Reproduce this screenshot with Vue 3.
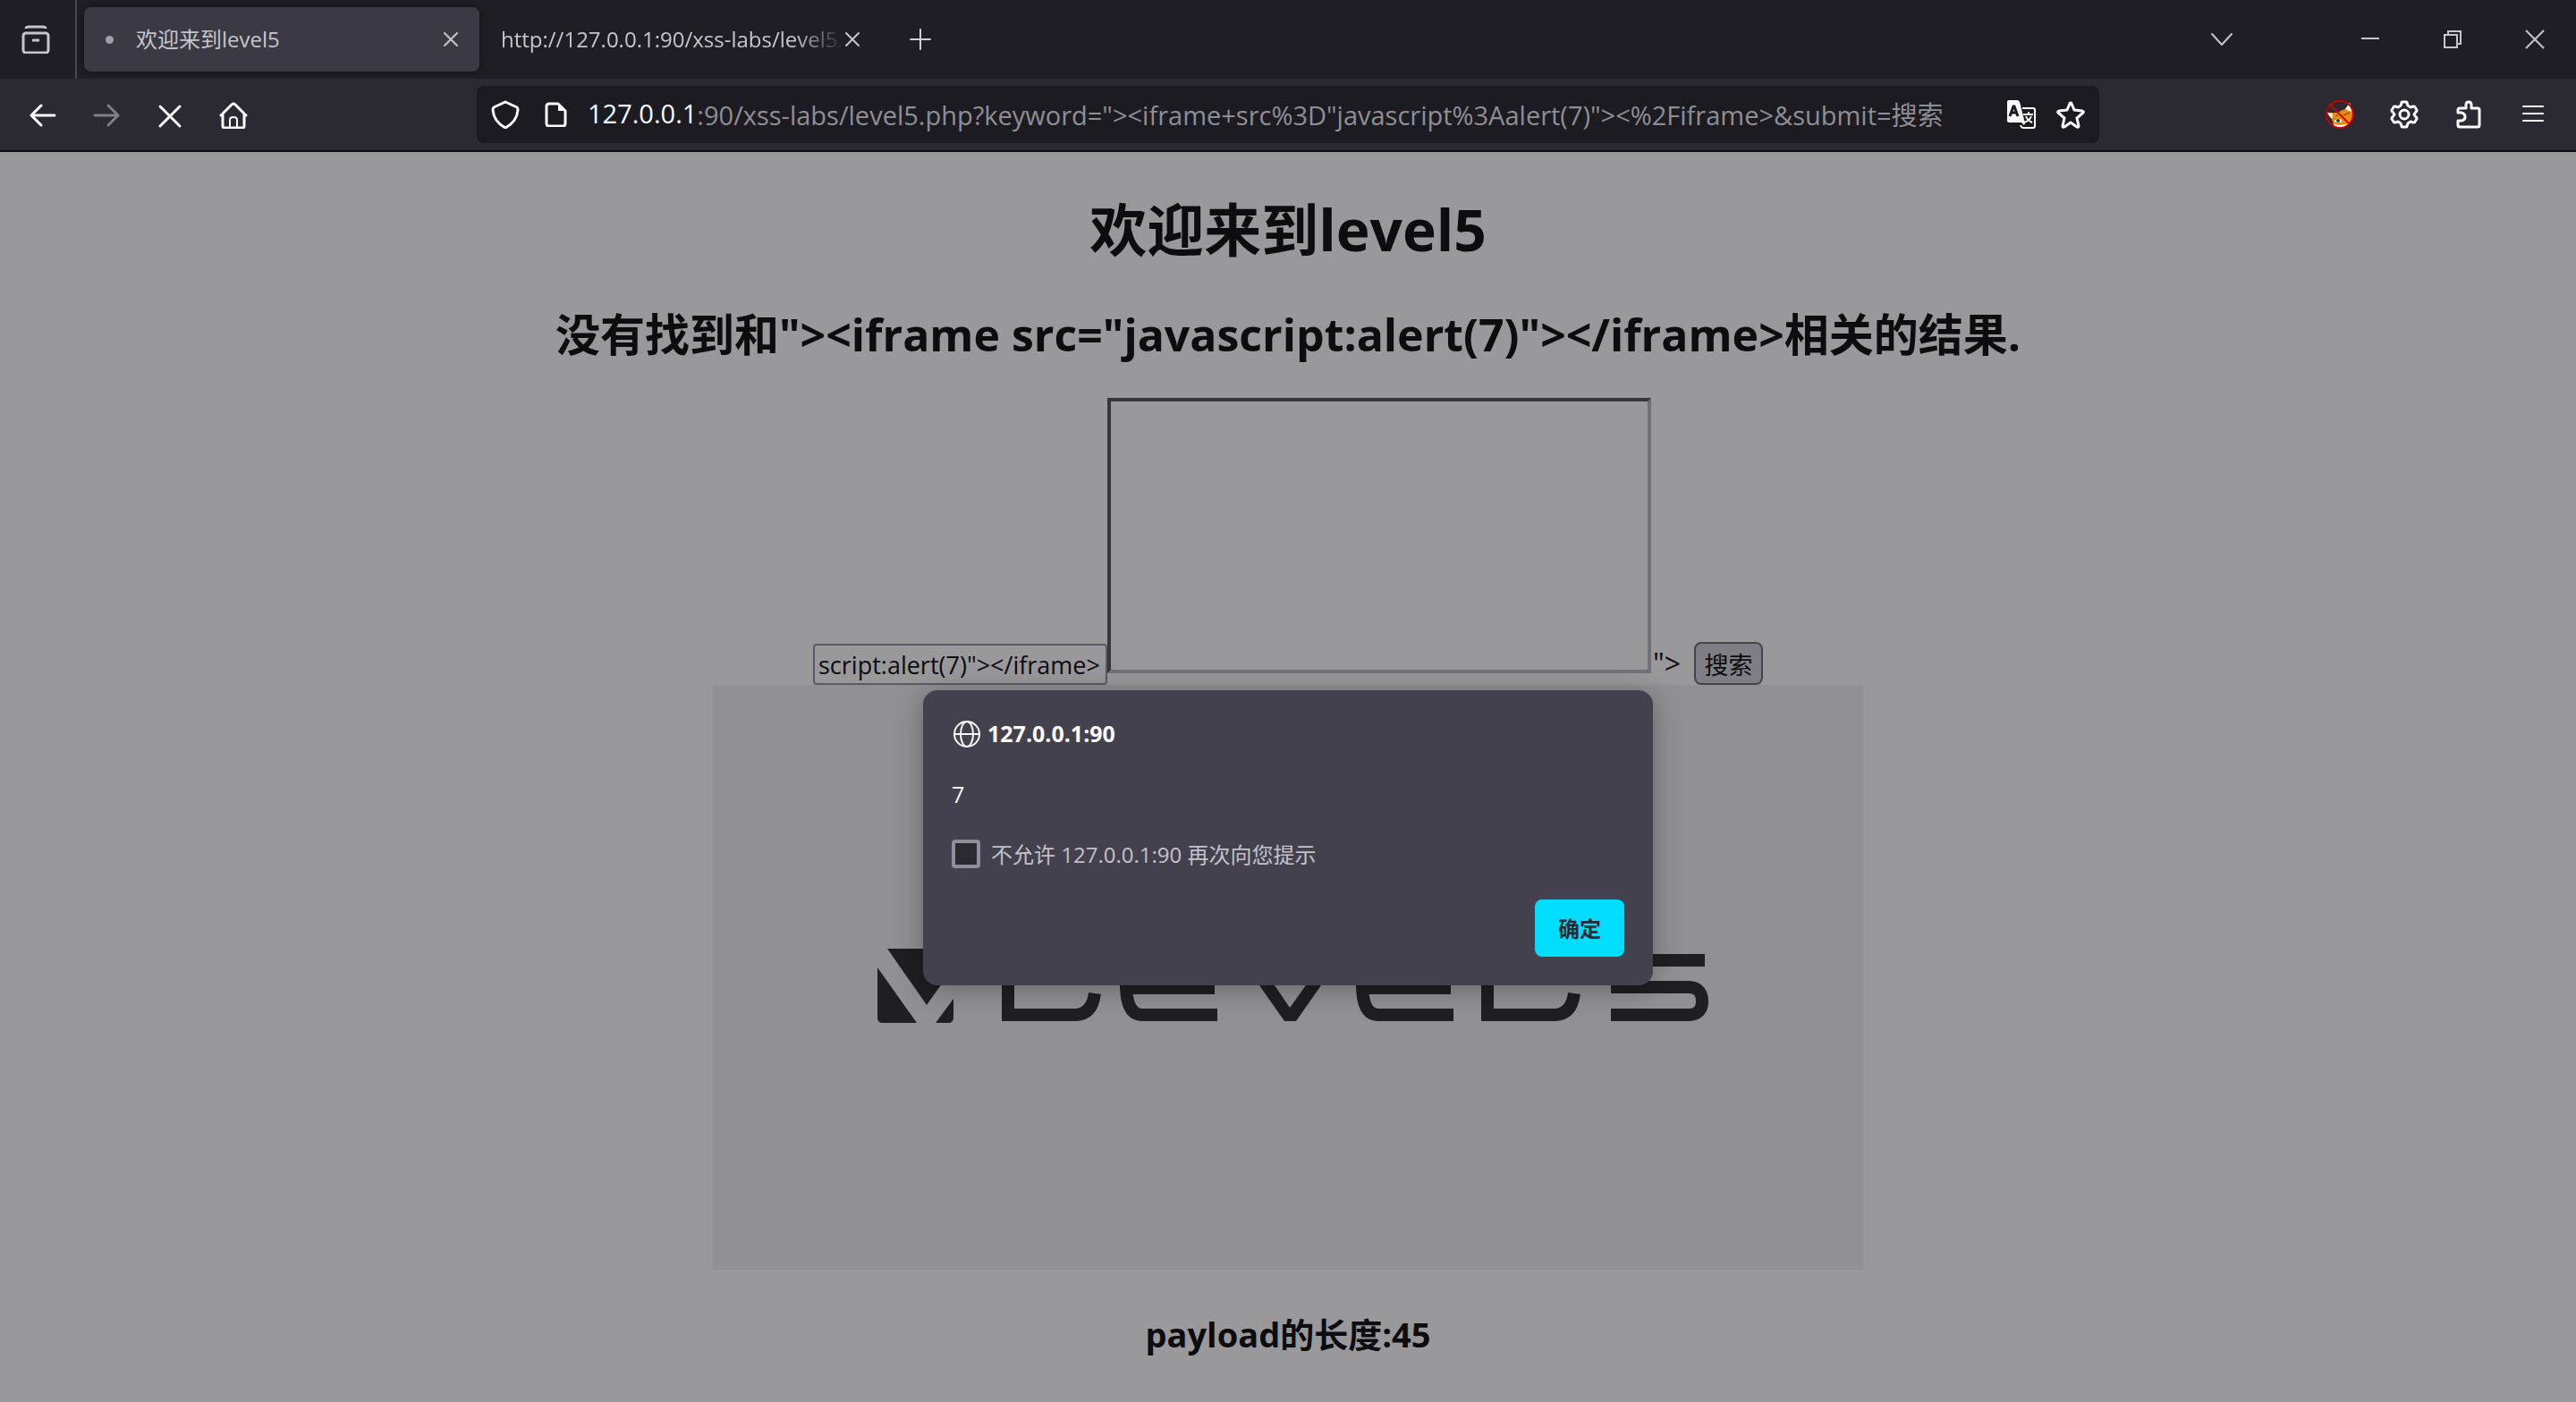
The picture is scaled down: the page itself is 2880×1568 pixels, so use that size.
<script setup>
import { ref } from 'vue'

const tabs = [
  { title: '欢迎来到level5', active: true },
  { title: 'http://127.0.0.1:90/xss-labs/level5.php', active: false }
]
const host = '127.0.0.1'
const path = ref(':90/xss-labs/level5.php?keyword="><iframe+src%3D"javascript%3Aalert(7)"><%2Fiframe>&submit=搜索')
const payload = '"><iframe src="javascript:alert(7)"></iframe>'
const keyword = ref('script:alert(7)"></iframe>')
const muted = ref(false)
</script>

<template>
  <div class="browser">
    <header class="tabstrip">
      <button class="icon-btn view-btn" aria-label="Firefox View">
        <svg width="32" height="32" viewBox="0 0 32 32" fill="none" stroke="#c6c6ca" stroke-width="3">
          <path d="M5 4Q5 2 8 2H24Q27 2 27 4" />
          <rect x="2" y="9" width="28" height="22" rx="3" />
          <path d="M12 17H20" />
        </svg>
      </button>
      <div v-for="tab in tabs" :key="tab.title" class="tab" :class="{ active: tab.active }">
        <span v-if="tab.active" class="throbber"></span>
        <span class="tab-title">{{ tab.title }}</span>
        <button class="icon-btn close-btn" aria-label="关闭标签页">
          <svg width="18" height="18" viewBox="0 0 18 18" fill="none" stroke="#c6c6ca" stroke-width="2" stroke-linecap="round"><path d="M2 2L16 16M16 2L2 16" /></svg>
        </button>
      </div>
      <button class="icon-btn new-btn" aria-label="新建标签页">
        <svg width="24" height="24" viewBox="0 0 24 24" stroke="#d0d0d4" stroke-width="2" stroke-linecap="round"><path d="M12 1V23M1 12H23" /></svg>
      </button>
      <div class="window-controls">
        <button class="icon-btn list-btn" aria-label="列出所有标签页">
          <svg width="26" height="16" viewBox="0 0 26 16" fill="none" stroke="#c6c6ca" stroke-width="2" stroke-linecap="round" stroke-linejoin="round"><path d="M2 2L13 14L24 2" /></svg>
        </button>
        <button class="icon-btn win-btn" aria-label="最小化">
          <svg width="22" height="22" viewBox="0 0 22 22" fill="none" stroke="#c6c6ca" stroke-width="2"><path d="M1 10H21" /></svg>
        </button>
        <button class="icon-btn win-btn" aria-label="还原">
          <svg width="22" height="22" viewBox="0 0 22 22" fill="none" stroke="#c6c6ca" stroke-width="2"><path d="M2 6H16V20H2ZM6 6V2H20V16H16" /></svg>
        </button>
        <button class="icon-btn win-btn" aria-label="关闭">
          <svg width="22" height="22" viewBox="0 0 22 22" fill="none" stroke="#c6c6ca" stroke-width="2"><path d="M1 1L21 21M21 1L1 21" /></svg>
        </button>
      </div>
    </header>

    <nav class="toolbar">
      <div class="nav-buttons">
        <button class="icon-btn" aria-label="后退">
          <svg width="32" height="32" viewBox="0 0 32 32" fill="none" stroke="#fbfbfe" stroke-width="3" stroke-linecap="round" stroke-linejoin="round"><path d="M29 17H3M14 6L3 17L14 28" /></svg>
        </button>
        <button class="icon-btn" aria-label="前进">
          <svg width="32" height="32" viewBox="0 0 32 32" fill="none" stroke="#7f7e84" stroke-width="3" stroke-linecap="round" stroke-linejoin="round"><path d="M3 17H29M18 6L29 17L18 28" /></svg>
        </button>
        <button class="icon-btn" aria-label="停止">
          <svg width="32" height="32" viewBox="0 0 32 32" fill="none" stroke="#fbfbfe" stroke-width="3" stroke-linecap="round"><path d="M5 7L27 29M27 7L5 29" /></svg>
        </button>
        <button class="icon-btn" aria-label="主页">
          <svg width="32" height="32" viewBox="0 0 32 32" fill="none" stroke="#fbfbfe" stroke-width="3" stroke-linecap="round" stroke-linejoin="round">
            <path d="M2 17L14 5Q16 3 18 5L30 17M4 15V29Q4 31 6 31H26Q28 31 28 29V15" />
            <path d="M12 30V22Q12 19 16 19Q20 19 20 22V30" stroke-width="2" />
          </svg>
        </button>
      </div>

      <div class="urlbar">
        <svg class="shield" width="32" height="32" viewBox="0 0 32 32" fill="none" stroke="#fbfbfe" stroke-width="3" stroke-linejoin="round"><path d="M16 2L29 8Q30 9 30 11Q29 24 16 31Q3 24 2 11Q2 9 3 8Z" /></svg>
        <svg class="page" width="26" height="28" viewBox="0 0 26 28" fill="none" stroke="#fbfbfe" stroke-width="3" stroke-linejoin="round">
          <path d="M5 2H15L23 10V24Q23 27 20 27H5Q2 27 2 24V5Q2 2 5 2Z" />
          <path d="M15 1V10H24Z" fill="#fbfbfe" stroke="none" />
        </svg>
        <label class="host" for="url">{{ host }}</label>
        <input id="url" v-model="path" class="url-input" type="text" />
        <button class="icon-btn translate" aria-label="翻译此页面">
          <svg width="34" height="34" viewBox="0 0 34 34" fill="none">
            <path d="M18 10H30Q32 10 32 12V30Q32 32 30 32H19Q17 32 16 29" stroke="#fbfbfe" stroke-width="2" />
            <path d="M3 1H12Q14 1 15 3L21 27Q20 30 18 27L17 26H3Q1 26 1 24V3Q1 1 3 1Z" fill="#fbfbfe" />
            <path d="M4 19L8 8H9L13 19M6 15H11" stroke="#1c1b22" stroke-width="3" />
            <path d="M19 17H30M25 14V17M22 19Q24 24 29 26M28 19Q26 24 20 26" stroke="#fbfbfe" stroke-width="2" />
          </svg>
        </button>
        <button class="icon-btn" aria-label="为此页添加书签">
          <svg width="32" height="32" viewBox="0 0 32 32" fill="none" stroke="#fbfbfe" stroke-width="3" stroke-linejoin="round"><path d="M16 3Q17 3 17 4L20 11L29 12Q31 13 30 14L23 20L25 29Q25 31 23 30L16 25L9 30Q7 31 7 29L9 20L2 14Q1 13 3 12L12 11L15 4Q15 3 16 3Z" /></svg>
        </button>
      </div>

      <div class="tool-buttons">
        <button class="icon-btn" aria-label="FoxyProxy">
          <svg width="32" height="32" viewBox="0 0 32 32" fill="none">
            <path d="M27 3L22 10Q17 11 14 14L2 14Q3 18 7 21Q8 28 14 30Q22 31 26 27Q31 22 30 11Z" fill="#ec8a0b" />
            <path d="M27 3L22 10L29 13ZM2 14L8 15L7 21Z" fill="#fff" />
            <path d="M8 26Q15 30 26 26L22 30Q15 32 10 29Z" fill="#fff" />
            <path d="M10 21L15 22M20 17L27 14M12 18L13 16" stroke="#5b3a12" stroke-width="1" />
            <ellipse cx="14" cy="23" rx="4" ry="2" fill="#fff" />
            <circle cx="14" cy="23" r="2" fill="#333" />
            <circle cx="16" cy="16" r="15" stroke="#c20000" stroke-width="2" />
            <path d="M5 5L27 27" stroke="#d40000" stroke-width="2" />
          </svg>
        </button>
        <button class="icon-btn" aria-label="设置">
          <svg width="32" height="32" viewBox="0 0 32 32" fill="none" stroke="#fbfbfe" stroke-width="3" stroke-linejoin="round">
            <path d="M14 2H18Q19 2 19 3L20 6L23 8L26 7Q28 7 28 8L30 11Q30 13 29 13L27 16L29 19Q30 19 30 21L28 24Q28 25 26 25L23 24L20 26L19 29Q19 30 18 30H14Q13 30 13 29L12 26L9 24L6 25Q4 25 4 24L2 21Q2 19 3 19L5 16L3 13Q2 13 2 11L4 8Q4 7 6 7L9 8L12 6L13 3Q13 2 14 2Z" />
            <circle cx="16" cy="16" r="5" />
          </svg>
        </button>
        <button class="icon-btn" aria-label="扩展">
          <svg width="32" height="32" viewBox="0 0 32 32" fill="none" stroke="#fbfbfe" stroke-width="3" stroke-linejoin="round"><path d="M4 14V11Q4 9 6 9H13V5Q13 2 16 2Q19 2 19 5V9H26Q28 9 28 11V28Q28 30 26 30H6Q4 30 4 28V23H8Q12 22 12 19Q12 15 8 14Z" /></svg>
        </button>
        <button class="icon-btn" aria-label="菜单">
          <svg width="32" height="32" viewBox="0 0 32 32" fill="none" stroke="#fbfbfe" stroke-width="2" stroke-linecap="round"><path d="M5 7H27M5 15H27M5 23H27" /></svg>
        </button>
      </div>
    </nav>

    <main class="viewport">
      <h1>欢迎来到level5</h1>
      <h2>没有找到和{{ payload }}相关的结果.</h2>
      <form class="search" @submit.prevent>
        <input v-model="keyword" class="keyword" type="text" aria-label="keyword" />
        <iframe class="frame" title="payload"></iframe>
        <span class="rest">"&gt;</span>
        <button class="submit" type="submit">搜索</button>
      </form>
      <svg class="banner" viewBox="0 0 1286 654" role="img" aria-label="level5">
        <rect width="1286" height="654" fill="#f1f1f1" />
        <g fill="#222">
          <path d="M184 316L228 378H190Q184 378 184 372Z" />
          <path d="M195 295H269V316L239 358Z" />
          <path d="M249 378L269 351V372Q269 378 263 378Z" />
          <path d="M586 301L611 336L639 376H652L680 336L704 301H688L663 336L645 361L628 336L603 301Z" />
        </g>
        <g fill="none" stroke="#222" stroke-width="14">
          <path d="M330 301V369H406Q424 368 427 345" />
          <path d="M564 308H480Q462 308 462 338Q463 369 480 369H564M462 339H561" />
          <path d="M828 308H744Q726 308 726 338Q727 369 744 369H828M726 339H825" />
          <path d="M866 301V369H942Q960 368 963 345" />
          <path d="M1109 308H1011V338H1092Q1106 339 1106 354Q1106 368 1092 369H1004" />
        </g>
      </svg>
      <h3>payload的长度:45</h3>

      <div class="scrim"></div>
      <dialog open class="prompt" aria-labelledby="prompt-host">
        <div class="prompt-head">
          <svg width="32" height="32" viewBox="0 0 32 32" fill="none" stroke="#fbfbfe" stroke-width="2">
            <circle cx="17" cy="16" r="14" />
            <ellipse cx="17" cy="16" rx="7" ry="14" />
            <path d="M3 16H31" />
          </svg>
          <strong id="prompt-host">127.0.0.1:90</strong>
        </div>
        <p class="prompt-text">7</p>
        <label class="mute">
          <input v-model="muted" type="checkbox" />
          <span>不允许 127.0.0.1:90 再次向您提示</span>
        </label>
        <div class="prompt-actions">
          <button class="ok">确定</button>
        </div>
      </dialog>
    </main>
  </div>
</template>

<style>
html, body, #app {
  height: 100%;
}
body {
  margin: 0;
  background: #99989b;
}
</style>

<style scoped>
.browser {
  display: flex;
  flex-direction: column;
  min-height: 100%;
  font-family: "Open Sans", "Noto Sans CJK SC", sans-serif;
  font-size: 24px;
}
.browser * {
  box-sizing: border-box;
}
button,
input {
  margin: 0;
  padding: 0;
  border: 0;
  background: none;
  color: inherit;
  font-family: inherit;
}
svg {
  display: block;
  flex: none;
}
.icon-btn {
  display: flex;
  flex: none;
  align-items: center;
  justify-content: center;
}

.tabstrip {
  display: flex;
  align-items: center;
  height: 88px;
  background: #1f1e25;
  color: #c6c6ca;
}
.view-btn {
  width: 86px;
  height: 88px;
  padding-right: 4px;
  border-right: 2px solid #4a4950;
}
.tab {
  display: flex;
  align-items: center;
  width: 442px;
  height: 72px;
  margin-left: 8px;
  padding: 0 23px 0 24px;
  border-radius: 8px;
}
.tab.active {
  background: #3a3944;
  box-shadow: 0 0 8px rgba(0, 0, 0, 0.4);
}
.tab:not(.active) {
  width: 430px;
  margin-left: 0;
  padding-right: 4px;
}
.throbber {
  width: 9px;
  height: 9px;
  margin-right: 25px;
  border-radius: 50%;
  background: #a09fa6;
}
.tab-title {
  flex: 1;
  overflow: hidden;
  line-height: 36px;
  white-space: nowrap;
}
.tab:not(.active) .tab-title {
  mask-image: linear-gradient(to left, transparent, #000 56px);
}
.new-btn {
  margin-left: 51px;
}
.window-controls {
  display: flex;
  align-items: center;
  margin-left: auto;
}
.list-btn {
  width: 72px;
  margin-right: 84px;
}
.win-btn {
  width: 92px;
  height: 88px;
}

.toolbar {
  display: flex;
  align-items: center;
  height: 82px;
  border-bottom: 2px solid #0c0c0d;
  background: #2b2a33;
  color: #fbfbfe;
}
.nav-buttons {
  display: flex;
  flex: none;
  gap: 39px;
  width: 533px;
  padding-left: 32px;
}
.urlbar {
  display: flex;
  flex: 1;
  align-items: center;
  height: 64px;
  padding: 0 16px;
  border-radius: 8px;
  background: #1c1b22;
  font-size: 29px;
}
.page {
  margin-left: 28px;
}
.host {
  height: 48px;
  margin-left: 22px;
  line-height: 46px;
}
.url-input {
  flex: 1;
  min-width: 0;
  height: 48px;
  padding-bottom: 2px;
  color: #8f8e94;
  font-size: 29px;
}
.translate {
  margin-right: 22px;
}
.tool-buttons {
  display: flex;
  flex: none;
  justify-content: flex-end;
  gap: 40px;
  width: 533px;
  padding-right: 32px;
}

.viewport {
  position: relative;
  display: flex;
  flex: 1;
  flex-direction: column;
  align-items: center;
  padding: 45px 16px 52px;
  background: #fff;
  color: #000;
}
h1,
h2,
h3 {
  margin: 0;
  font-weight: 700;
  text-align: center;
}
h1 {
  font-size: 64px;
  line-height: 84px;
}
h2 {
  margin-top: 43px;
  font-size: 50px;
  line-height: 64px;
}
h3 {
  margin-top: 48px;
  font-size: 38px;
  line-height: 48px;
}
.search {
  display: flex;
  align-items: flex-end;
  margin-top: 39px;
}
.keyword {
  width: 329px;
  height: 46px;
  padding: 0 4px;
  border: 2px solid #8f8f9d;
  border-radius: 4px;
  font-size: 27px;
}
.frame {
  width: 608px;
  height: 308px;
  margin-bottom: 13px;
  border: 4px solid;
  border-color: #4e4e50 #b9b9ba #b9b9ba #4e4e50;
}
.rest {
  width: 48px;
  padding-left: 2px;
  font-size: 32px;
  line-height: 48px;
}
.submit {
  width: 77px;
  height: 48px;
  border: 2px solid #676774;
  border-radius: 8px;
  background: #d0d0d7;
  font-size: 27px;
}
.banner {
  width: 1286px;
  max-width: 100%;
}
.scrim {
  position: absolute;
  inset: 0;
  background: rgba(28, 27, 34, 0.45);
}
.prompt {
  position: absolute;
  top: 602px;
  width: 816px;
  margin: 0 auto;
  padding: 32px;
  border: 0;
  border-radius: 16px;
  background: #42414d;
  box-shadow: 0 4px 32px rgba(0, 0, 0, 0.3);
  color: #fbfbfe;
}
.prompt-head {
  display: flex;
  align-items: center;
  gap: 8px;
  height: 34px;
  font-size: 25px;
  line-height: 32px;
}
.prompt-head strong {
  padding-bottom: 2px;
}
.prompt-text {
  margin: 32px 0;
  font-size: 25px;
  line-height: 36px;
}
.mute {
  display: flex;
  align-items: center;
  gap: 12px;
  height: 34px;
  color: #c3c2c9;
}
.mute span {
  padding-bottom: 2px;
}
.mute input {
  width: 32px;
  height: 32px;
  appearance: none;
  border: 4px solid #8f8f9d;
  border-radius: 4px;
  background: #2b2a33;
}
.prompt-actions {
  display: flex;
  justify-content: flex-end;
  margin-top: 34px;
}
.ok {
  width: 100px;
  height: 64px;
  padding-bottom: 2px;
  border-radius: 8px;
  background: #00ddff;
  color: #2b2a33;
  font-size: 24px;
  font-weight: 700;
}
</style>
